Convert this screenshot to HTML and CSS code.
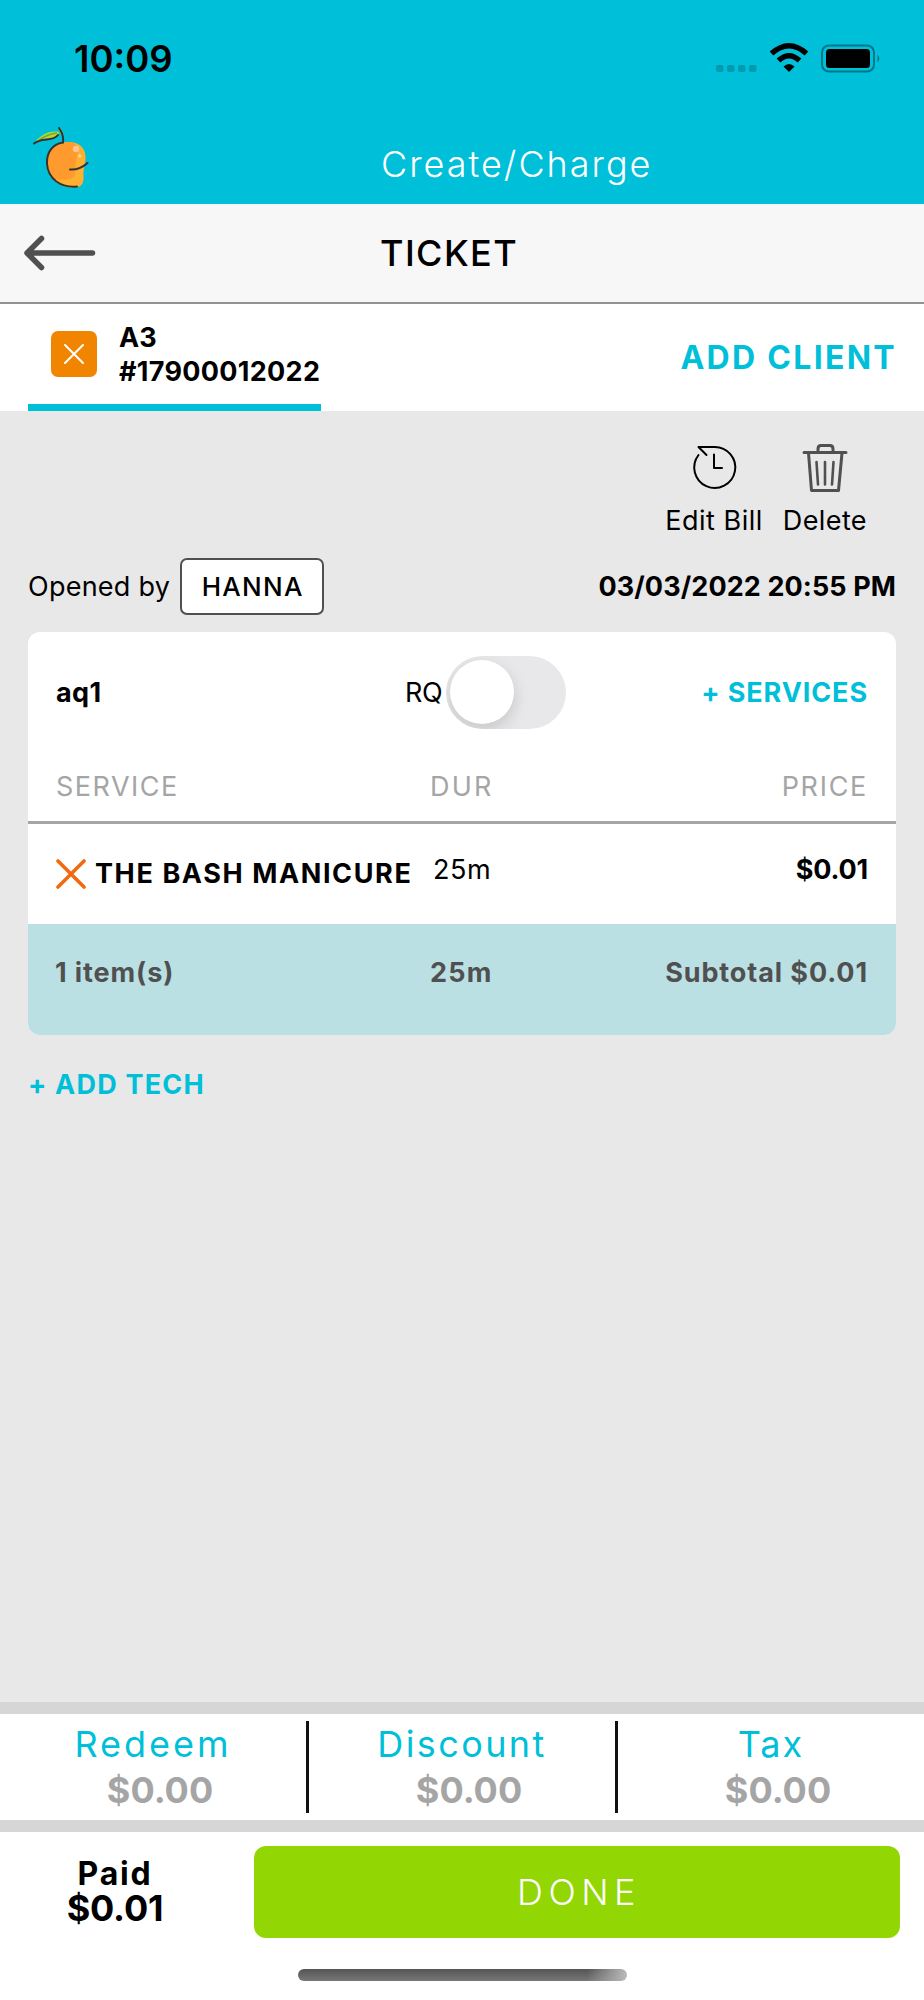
FILE: index.html
```html
<!DOCTYPE html>
<html lang="en">
<head>
<meta charset="utf-8">
<title>Ticket</title>
<link rel="stylesheet" href="styles.css">
</head>
<body>
<header class="top">
  <div class="status">
    <span class="t time">10:09</span>
    <svg class="status-icons" width="170" height="34" viewBox="0 0 170 34">
      <g fill="#009bb1"><rect x="6" y="23" width="7.500" height="7" rx="2"/><rect x="17" y="23" width="7.500" height="7" rx="2"/><rect x="28" y="23" width="7.500" height="7" rx="2"/><rect x="39" y="23" width="7.500" height="7" rx="2"/></g>
      <path d="M61.500 11.500Q79 -4 96.500 11.500" fill="none" stroke="#000" stroke-width="5.500"/>
      <path d="M68.500 18.500Q79 9 89.500 18.500" fill="none" stroke="#000" stroke-width="5.500"/>
      <path d="M73.500 24.500Q79 19.500 84.500 24.500L79 30Z"/>
      <rect x="112" y="3.500" width="52" height="26" rx="7" fill="none" stroke="#00768a" stroke-width="2"/>
      <rect x="116" y="7" width="44" height="19" rx="3.500"/>
      <path d="M167.500 12.500Q171 16.500 167.500 20.500Z" fill="#00768a"/>
    </svg>
  </div>
  <div class="brand">
    <svg class="mango" width="60" height="64" viewBox="0 0 60 64">
      <path d="M34 15.500C46 13 55 19 55.500 29C56 36 53 41 53.500 49C54 57 51 60.500 44 60.500C28 61 17 51 16.500 36C16 25 23 17 34 15.500Z" fill="#ffb030"/>
      <path d="M34 15.500C44 13 50 19 48 27C45 33 46 43 45 48C42 54 33 53 25 52C18 48 16 41 16.500 35C17 24 24 17 34 15.500Z" fill="#ff9b2e"/>
      <path d="M4 16.500C10 8 20 3 29 5C29 11 24 12 17 12C12 12 8 14 4 16.500Z" fill="#b9d532"/>
      <path d="M9 13Q18 7 27 6" fill="none" stroke="#68ad43" stroke-width="1.300"/>
      <path d="M28 1Q32 -1 33.500 10L31 8Z" fill="#a8cb2c"/>
      <path d="M4 16.500C12 10 23 15 28 8M29 1Q34 8 33 15.500C22 17 16.500 26 17 37C18 52 31 61 47 59.500M40 42.500C46 43 53 40 57.500 36" fill="none" stroke="#333" stroke-width="2" stroke-linecap="round"/>
      <circle cx="46" cy="22" r="3.200" fill="#ffc493"/><circle cx="49.500" cy="29" r="1.800" fill="#ffcd8e"/>
    </svg>
    <h1 class="t app-title">Create/Charge</h1>
  </div>
</header>
<div class="titlebar">
  <svg class="back" width="76" height="40" viewBox="0 0 76 40"><path d="M21.500 5.500L7 20L21.500 34.500M8 20H72.500" fill="none" stroke="#505050" stroke-width="5.500" stroke-linecap="round" stroke-linejoin="round"/></svg>
  <h2 class="t ticket">TICKET</h2>
</div>
<div class="tabs">
  <div class="tab">
    <span class="close"><svg width="20" height="20" viewBox="0 0 20 20"><path d="M1 1L19 19M19 1L1 19" stroke="#fff" stroke-width="2" stroke-linecap="round"/></svg></span>
    <div class="tab-text"><div><span class="t">A3</span></div><div><span class="t num">#17900012022</span></div></div>
  </div>
  <span class="t add-client">ADD CLIENT</span>
</div>
<main class="content">
  <div class="actions">
    <div class="action"><svg width="48" height="52" viewBox="0 0 48 52"><path d="M8.500 15A20.500 20.500 0 1 0 24 7H8.500L16.500 15M24 14.500V28H32" fill="none" stroke="#000" stroke-width="2" stroke-linecap="round" stroke-linejoin="round"/></svg><span class="t edit">Edit Bill</span></div>
    <div class="action"><svg width="48" height="52" viewBox="0 0 48 52"><path d="M3 12.500H45M7.500 13L10.500 50.500H37.500L41 13M17 12V9Q17 5.500 20 5.500H29Q32 5.500 32 9V12" fill="none" stroke="#505050" stroke-width="3" stroke-linecap="round" stroke-linejoin="round"/><path d="M15.500 22L17 44.500M24 22V44.500M32.500 22L31 44.500" stroke="#505050" stroke-width="2.600" stroke-linecap="round"/></svg><span class="t delete">Delete</span></div>
  </div>
  <div class="opened">
    <span class="t by">Opened by</span>
    <span class="who"><span class="t hanna">HANNA</span></span>
    <span class="t date">03/03/2022 20:55 PM</span>
  </div>
  <section class="card">
    <div class="tech">
      <span class="t aq">aq1</span>
      <span class="t rq">RQ</span>
      <span class="toggle"><span class="knob"></span></span>
      <span class="t services">+ SERVICES</span>
    </div>
    <div class="row head"><span><span class="t h-service">SERVICE</span></span><span><span class="t h-dur">DUR</span></span><span><span class="t h-price">PRICE</span></span></div>
    <div class="row item">
      <span class="name"><svg width="30" height="30" viewBox="0 0 30 30"><path d="M2 2L28 28M28 2L2 28" stroke="#f26a0f" stroke-width="3.600" stroke-linecap="round"/></svg><span class="t service-name">THE BASH MANICURE</span></span>
      <span class="dur"><span class="t">25m</span></span>
      <span><span class="t price">$0.01</span></span>
    </div>
    <div class="row foot"><span><span class="t count">1 item(s)</span></span><span><span class="t sum-dur">25m</span></span><span><span class="t subtotal">Subtotal $0.01</span></span></div>
  </section>
  <span class="t add-tech">+ ADD TECH</span>
</main>
<div class="totals">
  <div class="total"><span class="t label redeem">Redeem</span><span class="t amount">$0.00</span></div>
  <div class="total"><span class="t label discount">Discount</span><span class="t amount">$0.00</span></div>
  <div class="total"><span class="t label tax">Tax</span><span class="t amount">$0.00</span></div>
</div>
<footer class="bottom">
  <div class="pay">
    <div class="paid"><span class="t paid-label">Paid</span><span class="t paid-value">$0.01</span></div>
    <button class="done"><span class="t done-label">DONE</span></button>
  </div>
  <div class="home"></div>
</footer>
</body>
</html>
```
FILE: styles.css
```css
* { box-sizing: border-box; }
body { margin: 0; width: 924px; height: 2000px; display: flex; flex-direction: column; background: #fff; color: #000; font: 400 27px/34px Inter, "Liberation Sans", sans-serif; overflow: hidden; }
h1, h2 { margin: 0; }
svg { display: block; flex: none; }
.t { white-space: pre; display: inline-block; }

.top { height: 204px; background: #00bfd9; }
.status { height: 118px; display: flex; justify-content: space-between; padding: 41px 44px 0 74px; }
.time { font-weight: 600; font-size: 36.500px; line-height: 36px; }
.status-icons { margin-top: 1px; }
.brand { display: flex; padding-left: 30px; height: 86px; align-items: flex-start; }
.mango { margin-top: 9px; }
.app-title { margin: 24px 0 0 291px; font-size: 36px; line-height: 44px; font-weight: 300; letter-spacing: 2px; color: #fff; }

.titlebar { height: 100px; background: #f7f7f7; border-bottom: 2px solid #929292; display: flex; align-items: center; padding-left: 20px; }
.ticket { margin-left: 284px; font-size: 36px; font-weight: 450; letter-spacing: 1.400px; }

.tabs { height: 107px; display: flex; justify-content: space-between; padding: 0 27px 0 28px; }
.tab { width: 293px; border-bottom: 7px solid #00bfd9; display: flex; padding: 27px 0 0 23px; }
.close { width: 46px; height: 46px; border-radius: 7px; background: #f28500; display: flex; align-items: center; justify-content: center; }
.tab-text { margin: -10px 0 0 22px; font-weight: 700; }
.num { letter-spacing: .300px; }
.add-client { margin-top: 37px; font-weight: 700; font-size: 32px; letter-spacing: 2.300px; color: #00bfd9; }

.content { height: 1291px; background: #e8e8e8; padding: 29px 28px 0; }
.actions { display: flex; justify-content: flex-end; gap: 20px; height: 118px; padding-right: 29px; }
.action { display: flex; flex-direction: column; align-items: center; }
.action .t { margin-top: 12px; }
.edit { letter-spacing: .500px; }
.delete { letter-spacing: .400px; }
.opened { display: flex; align-items: center; height: 57px; }
.by { letter-spacing: .250px; }
.who { margin-left: 10px; width: 144px; height: 57px; border: 2px solid #505050; border-radius: 7px; background: #fff; display: flex; align-items: center; justify-content: center; }
.hanna { font-size: 26px; font-weight: 450; letter-spacing: 1.300px; margin-right: -1px; }
.date { margin-left: auto; font-weight: 700; letter-spacing: .100px; }

.card { margin-top: 17px; height: 403px; border-radius: 12px; background: #fff; overflow: hidden; }
.tech { height: 121px; display: grid; grid-template-columns: 349px 41px 120px 1fr; align-items: center; padding: 0 28px; }
.aq { font-weight: 700; letter-spacing: .400px; }
.rq { letter-spacing: -.500px; }
.toggle { width: 120px; height: 73px; border-radius: 37px; background: #e8e8ea; padding: 4px; overflow: hidden; }
.knob { display: block; width: 64px; height: 64px; border-radius: 50%; background: #fff; box-shadow: 0 6px 16px rgba(0,0,0,.15); }
.services { justify-self: end; font-weight: 700; letter-spacing: .900px; color: #00bfd9; }
.row { display: grid; grid-template-columns: 374px 1fr 1fr; padding: 0 28px; }
.row > :last-child { text-align: right; }
.head { height: 71px; padding-top: 17px; color: #a5a5a5; border-bottom: 3px solid #a5a5a5; }
.h-service { letter-spacing: 1.500px; }
.h-dur { letter-spacing: 2.200px; }
.h-price { letter-spacing: 1.700px; }
.item { height: 100px; padding-top: 29px; font-weight: 700; }
.name { display: flex; gap: 9px; align-items: center; height: 42px; }
.service-name { letter-spacing: 1.600px; }
.dur { font-weight: 400; padding-left: 3px; letter-spacing: .500px; }
.price { letter-spacing: -.200px; }
.foot { height: 111px; background: #bae0e4; color: #505050; padding-top: 32px; font-weight: 700; }
.count { letter-spacing: .900px; margin-left: -1px; }
.sum-dur { letter-spacing: 1.200px; }
.subtotal { letter-spacing: .900px; }
.add-tech { margin-top: 33px; font-weight: 700; letter-spacing: 1.200px; color: #00bfd9; }

.totals { height: 130px; border: solid #d6d6d6; border-width: 12px 0; display: grid; grid-template-columns: 309px 309px 306px; padding: 7px 0; }
.total { display: flex; flex-direction: column; align-items: center; border-right: 3px solid #111; font-size: 36px; line-height: 46px; }
.total:last-child { border: 0; }
.label { color: #00bfd9; }
.redeem { letter-spacing: 3px; }
.discount { letter-spacing: 2.400px; }
.tax { letter-spacing: 2px; }
.amount { color: #a5a5a5; font-weight: 700; padding-left: 14px; }

.bottom { height: 168px; }
.pay { display: flex; padding: 14px 24px 0 0; }
.paid { width: 230px; display: flex; flex-direction: column; align-items: center; font-weight: 700; padding-top: 11px; }
.paid-label { font-size: 32px; letter-spacing: 1.800px; }
.paid-value { font-size: 36px; letter-spacing: -.200px; }
.done { margin-left: 24px; width: 646px; height: 92px; border: 0; border-radius: 12px; background: #92d603; color: #fff; font: 300 36px/44px Inter, sans-serif; }
.done-label { letter-spacing: 5.500px; margin-right: -4px; }
.home { width: 329px; height: 12px; border-radius: 6px; margin: 31px 0 0 298px; background: linear-gradient(90deg, rgba(190,190,190,0) 88%, #bbb), linear-gradient(#555, #777); }
```
